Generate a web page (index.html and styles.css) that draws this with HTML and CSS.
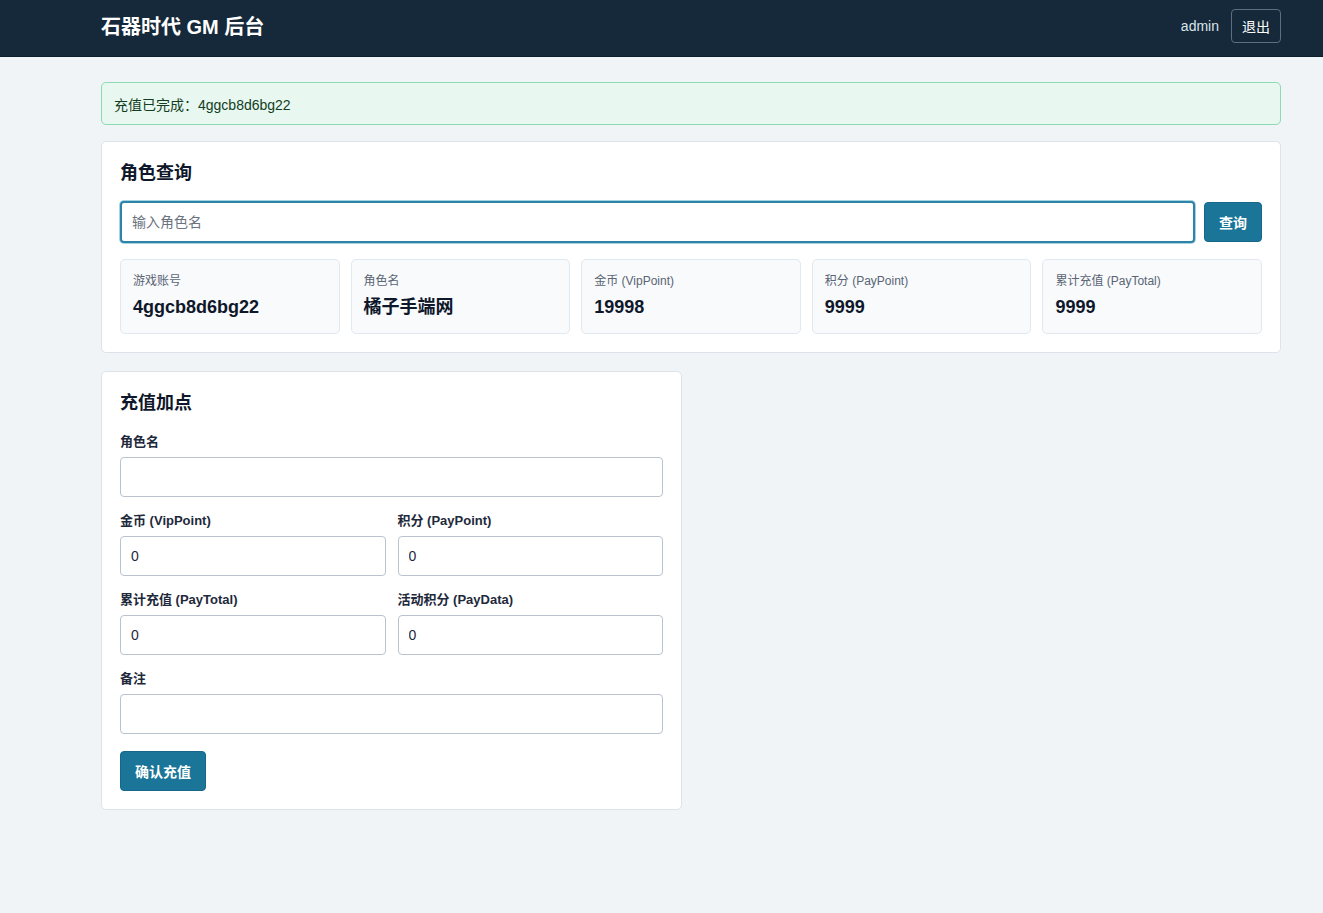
FILE: index.html
```html
<!DOCTYPE html>
<html lang="zh-CN">
  <head>
    <meta charset="UTF-8" />
    <title>石器时代 GM 后台</title>
    <link rel="stylesheet" href="styles.css">
  </head>
  <body>
    <div class="topbar">
      <div class="topbar-inner">
        <div class="brand">石器时代 GM 后台</div>
        <div class="user">
          <span class="user-name">admin</span>
          <button class="btn-logout">退出</button>
        </div>
      </div>
    </div>

    <div class="main">
      <div class="alert">充值已完成：4ggcb8d6bg22</div>

      <div class="card">
        <h2 class="card-title card-title-tight">角色查询</h2>
        <div class="search">
          <input class="input input-focus" type="text" placeholder="输入角色名">
          <button class="btn">查询</button>
        </div>
        <div class="stats">
          <div class="stat">
            <div class="stat-label">游戏账号</div>
            <div class="stat-value">4ggcb8d6bg22</div>
          </div>
          <div class="stat">
            <div class="stat-label">角色名</div>
            <div class="stat-value">橘子手端网</div>
          </div>
          <div class="stat">
            <div class="stat-label">金币 (VipPoint)</div>
            <div class="stat-value">19998</div>
          </div>
          <div class="stat">
            <div class="stat-label">积分 (PayPoint)</div>
            <div class="stat-value">9999</div>
          </div>
          <div class="stat">
            <div class="stat-label">累计充值 (PayTotal)</div>
            <div class="stat-value">9999</div>
          </div>
        </div>
      </div>

      <div class="card card-half">
        <h2 class="card-title">充值加点</h2>
        <div class="field">
          <label class="label">角色名</label>
          <input class="input" type="text">
        </div>
        <div class="row">
          <div class="field">
            <label class="label">金币 (VipPoint)</label>
            <input class="input" type="text" value="0">
          </div>
          <div class="field">
            <label class="label">积分 (PayPoint)</label>
            <input class="input" type="text" value="0">
          </div>
        </div>
        <div class="row">
          <div class="field">
            <label class="label">累计充值 (PayTotal)</label>
            <input class="input" type="text" value="0">
          </div>
          <div class="field">
            <label class="label">活动积分 (PayData)</label>
            <input class="input" type="text" value="0">
          </div>
        </div>
        <div class="field">
          <label class="label">备注</label>
          <input class="input" type="text">
        </div>
        <button class="btn btn-submit">确认充值</button>
      </div>
    </div>
  </body>
</html>
```

FILE: styles.css
```css
* {
  margin: 0;
  padding: 0;
  box-sizing: border-box;
}
body {
  font-family: "Liberation Sans", "Noto Sans CJK SC", sans-serif;
  background-color: #f1f4f7;
  color: #0f172a;
  font-size: 14px;
}

/* 顶部栏 */
.topbar {
  height: 57px;
  background-color: #15293b;
  border-bottom: 1px solid #0e1d2a;
}
.topbar-inner {
  height: 100%;
  padding: 0 42px 0 101px;
  display: flex;
  justify-content: space-between;
  align-items: center;
}
.brand {
  color: #fff;
  font-size: 20px;
  font-weight: bold;
  margin-top: -5px;
}
.user {
  display: flex;
  align-items: center;
  gap: 12px;
  margin-top: -5px;
}
.user-name {
  color: #dbe3ea;
  font-size: 14px;
}
.btn-logout {
  height: 34px;
  padding: 0 10px;
  background: transparent;
  color: #fff;
  font-family: inherit;
  font-size: 14px;
  border: 1px solid #5d6e7e;
  border-radius: 4px;
}

/* 主体 */
.main {
  padding: 25px 42px 40px 101px;
  display: flex;
  flex-direction: column;
  align-items: flex-start;
  gap: 16px;
}
.alert {
  width: 100%;
  height: 43px;
  padding: 0 12px;
  display: flex;
  align-items: center;
  background-color: #e8f7ef;
  border: 1px solid #8cdbb2;
  border-radius: 5px;
  color: #123d23;
  font-size: 14px;
}
.card {
  width: 100%;
  padding: 18px;
  background-color: #fff;
  border: 1px solid #dde3ea;
  border-radius: 5px;
}
.card-half {
  width: 581px;
  margin-top: 2px;
}
.card-title {
  font-size: 18px;
  line-height: 26px;
  font-weight: bold;
  margin-bottom: 16px;
}
.card-title-tight {
  margin-bottom: 15px;
}

/* 查询 */
.search {
  display: flex;
  gap: 9px;
}
.input {
  width: 100%;
  height: 40px;
  padding: 0 10px;
  font-family: inherit;
  font-size: 14px;
  color: #1e293b;
  background: #fff;
  border: 1px solid #b9c3cd;
  border-radius: 4px;
  outline: none;
}
.input::placeholder {
  color: #6b7280;
}
.input-focus {
  height: 42px;
  flex: 1;
  border: 2px solid #2d84a6;
  box-shadow: 0 0 0 1px #a6d3e3;
}
.btn {
  height: 40px;
  padding: 0 14px;
  margin-top: 1px;
  background-color: #1a7598;
  color: #fff;
  font-family: inherit;
  font-size: 14px;
  font-weight: bold;
  border: 1px solid #16678a;
  border-radius: 4px;
}
.btn-submit {
  margin-top: 17px;
}

/* 角色信息 */
.stats {
  margin-top: 16px;
  display: grid;
  grid-template-columns: repeat(5, 1fr);
  gap: 11px;
}
.stat {
  height: 75px;
  padding: 13px 12px 0;
  background-color: #f8fafc;
  border: 1px solid #e2e8f0;
  border-radius: 5px;
}
.stat-label {
  font-size: 12px;
  line-height: 16px;
  color: #5a6473;
}
.stat-value {
  margin-top: 7px;
  font-size: 18px;
  line-height: 22px;
  font-weight: bold;
}

/* 充值表单 */
.field {
  display: flex;
  flex-direction: column;
  gap: 7px;
}
.field + .row,
.row + .row,
.row + .field {
  margin-top: 14px;
}
.row {
  display: flex;
  gap: 12px;
}
.row .field {
  flex: 1;
}
.label {
  padding-top: 2px;
  font-size: 13px;
  line-height: 16px;
  font-weight: bold;
  color: #1e293b;
}
```
